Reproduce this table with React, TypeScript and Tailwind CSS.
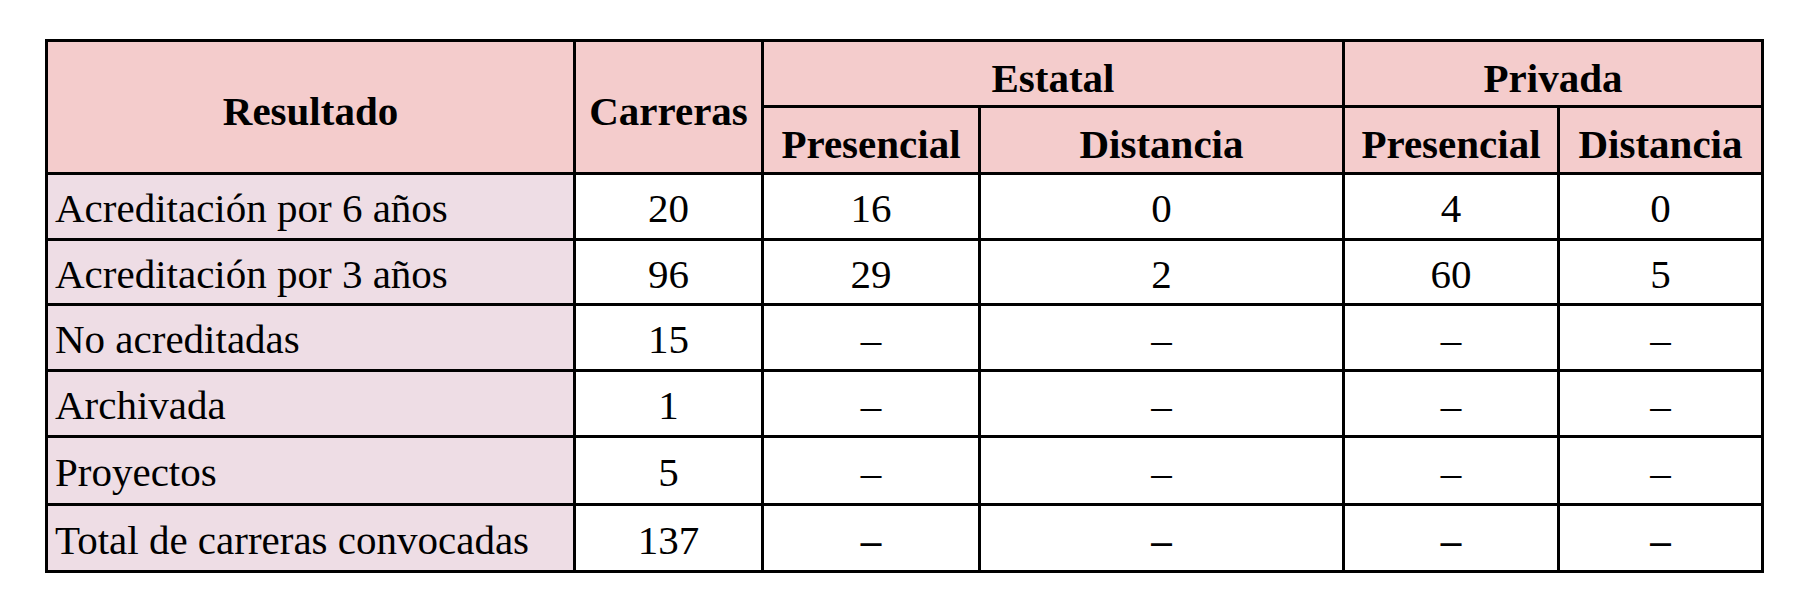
import React from 'react';

type Row = {
  label: string;
  values: string[];
  total?: boolean;
};

const ROWS: Row[] = [
  { label: 'Acreditación por 6 años', values: ['20', '16', '0', '4', '0'] },
  { label: 'Acreditación por 3 años', values: ['96', '29', '2', '60', '5'] },
  { label: 'No acreditadas', values: ['15', '–', '–', '–', '–'] },
  { label: 'Archivada', values: ['1', '–', '–', '–', '–'] },
  { label: 'Proyectos', values: ['5', '–', '–', '–', '–'] },
  { label: 'Total de carreras convocadas', values: ['137', '–', '–', '–', '–'], total: true },
];

const ROW_HEIGHTS = ['h-[66px]', 'h-[65px]', 'h-[66px]', 'h-[66px]', 'h-[68px]', 'h-[67px]'];

const th = 'border-[3px] border-black bg-[#f4cccc] font-bold text-center align-middle px-[4px] pt-[8px]';
const td = 'border-[3px] border-black align-middle';

const App: React.FC = () => {
  return (
    <div className="w-[1808px] h-[606px] bg-white pt-[39px] pl-[45px] text-black [font-family:'Liberation_Serif','Times_New_Roman',serif] text-[41px] leading-[46px]">
      <table className="table-fixed border-collapse w-[1719px]">
        <colgroup>
          <col className="w-[528px]" />
          <col className="w-[188px]" />
          <col className="w-[217px]" />
          <col className="w-[364px]" />
          <col className="w-[215px]" />
          <col className="w-[204px]" />
        </colgroup>
        <thead>
          <tr className="h-[66px]">
            <th rowSpan={2} className={th}>Resultado</th>
            <th rowSpan={2} className={th}>Carreras</th>
            <th colSpan={2} className={th}>Estatal</th>
            <th colSpan={2} className={th}>Privada</th>
          </tr>
          <tr className="h-[67px]">
            <th className={th}>Presencial</th>
            <th className={th}>Distancia</th>
            <th className={th}>Presencial</th>
            <th className={th}>Distancia</th>
          </tr>
        </thead>
        <tbody>
          {ROWS.map((row, i) => (
            <tr key={row.label} className={ROW_HEIGHTS[i]}>
              <td className={`${td} bg-[#eedde5] text-left pl-[7px] pt-[3px]`}>{row.label}</td>
              {row.values.map((v, j) => (
                <td
                  key={j}
                  className={`${td} text-center pt-[3px] ${row.total && v === '–' ? 'font-bold' : ''}`}
                >
                  {v}
                </td>
              ))}
            </tr>
          ))}
        </tbody>
      </table>
    </div>
  );
};

export default App;
